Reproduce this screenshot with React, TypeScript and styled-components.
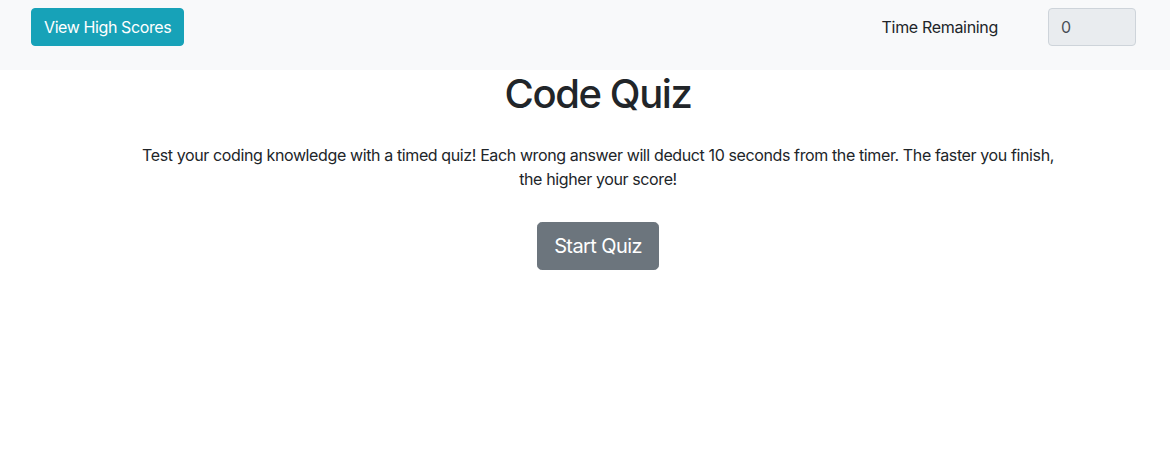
import React from "react";
import styled, { createGlobalStyle } from "styled-components";

const Global = createGlobalStyle`
  html, body { margin: 0; padding: 0; background: #fff; }
  body {
    font-family: Inter, "Helvetica Neue", "Liberation Sans", Arial, sans-serif;
    font-size: 16px;
    line-height: 1.5;
    letter-spacing: -0.02em;
    color: #212529;
  }
  * { box-sizing: border-box; }
`;

const Navbar = styled.nav`
  height: 70px;
  background: #f8f9fa;
  display: flex;
  align-items: flex-start;
  justify-content: space-between;
  padding: 8px 34px 0 31px;
`;

const InfoButton = styled.button`
  height: 38px;
  padding: 0 12px;
  background: #17a2b8;
  border: 1px solid #17a2b8;
  border-radius: 4px;
  color: #fff;
  font-family: inherit;
  font-size: 16px;
  letter-spacing: -0.025em;
  line-height: 1.5;
  cursor: pointer;
`;

const TimerGroup = styled.div`
  display: flex;
  align-items: center;
  height: 38px;
  gap: 50px;
`;

const TimerLabel = styled.span`
  font-size: 16px;
  color: #212529;
`;

const TimerInput = styled.input`
  width: 88px;
  height: 38px;
  padding: 0 12px;
  background: #e9ecef;
  border: 1px solid #ced4da;
  border-radius: 4px;
  color: #495057;
  font-family: inherit;
  font-size: 16px;
`;

const Main = styled.main`
  display: flex;
  flex-direction: column;
  align-items: center;
  padding-left: 26px;
`;

const Title = styled.h1`
  margin: 0 0 25px;
  font-size: 40px;
  font-weight: 500;
  line-height: 1.2;
  letter-spacing: -0.035em;
  color: #212529;
`;

const Intro = styled.p`
  margin: 0 0 31px;
  width: 930px;
  text-align: center;
  font-size: 16px;
  line-height: 24px;
  letter-spacing: -0.024em;
`;

const StartButton = styled.button`
  height: 48px;
  padding: 0 16px;
  background: #6c757d;
  border: 1px solid #6c757d;
  border-radius: 4.8px;
  color: #fff;
  font-family: inherit;
  font-size: 20px;
  letter-spacing: -0.03em;
  line-height: 1.5;
  cursor: pointer;
`;

export default function App() {
  return (
    <>
      <Global />
      <Navbar>
        <InfoButton>View High Scores</InfoButton>
        <TimerGroup>
          <TimerLabel>Time Remaining</TimerLabel>
          <TimerInput value="0" readOnly />
        </TimerGroup>
      </Navbar>
      <Main>
        <Title>Code Quiz</Title>
        <Intro>
          Test your coding knowledge with a timed quiz! Each wrong answer will deduct 10 seconds from the timer. The faster you finish, the higher your score!
        </Intro>
        <StartButton>Start Quiz</StartButton>
      </Main>
    </>
  );
}
